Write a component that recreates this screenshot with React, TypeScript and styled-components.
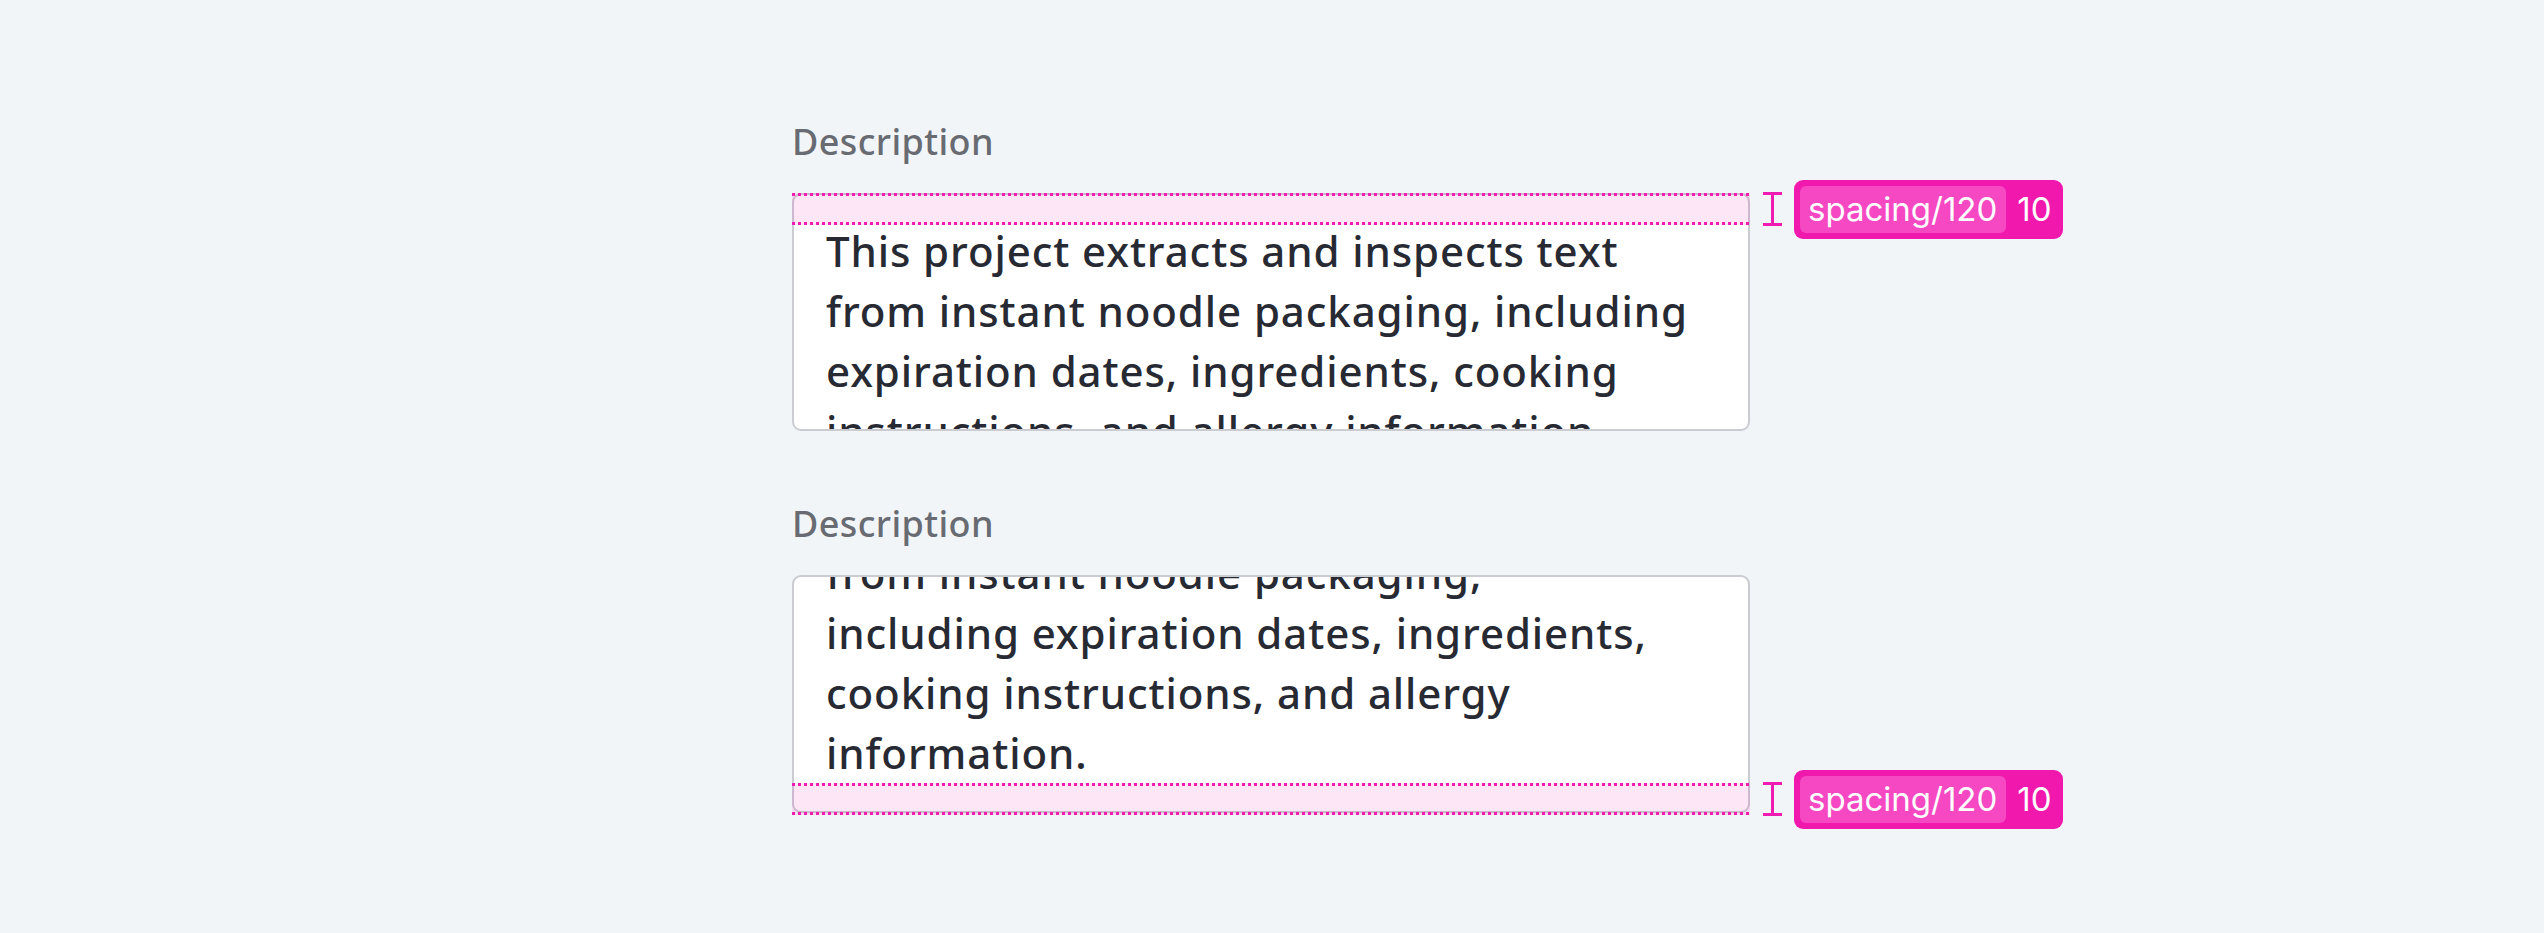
import React from 'react';
import styled, { createGlobalStyle } from 'styled-components';

const GlobalStyle = createGlobalStyle`
  html, body {
    margin: 0;
    padding: 0;
    background: #f2f5f8;
  }
`;

const Page = styled.main`
  min-height: 933px;
  box-sizing: border-box;
  padding: 120px 0 0 792px;
  display: flex;
  flex-direction: column;
  gap: 71px;
  background: #f2f5f8;
`;

const Field = styled.section`
  width: 958px;
  display: flex;
  flex-direction: column;
  gap: 29px;
`;

const Label = styled.label`
  font-family: 'Noto Sans', 'Lato', sans-serif;
  font-size: 36px;
  line-height: 44px;
  letter-spacing: 0.4px;
  font-weight: 500;
  color: #686b72;
`;

const BoxWrap = styled.div`
  position: relative;
`;

const Box = styled.div<{ $scrolled?: boolean }>`
  height: 238px;
  box-sizing: border-box;
  border: 2px solid #cbccd1;
  border-radius: 9px;
  background: #ffffff;
  overflow: hidden;
  display: flex;
  flex-direction: column;
  justify-content: ${(p) => (p.$scrolled ? 'flex-end' : 'flex-start')};
  padding: ${(p) => (p.$scrolled ? '0 32px 28px 32px' : '26px 32px 0 32px')};
`;

const Text = styled.p`
  margin: 0;
  font-family: 'Noto Sans', 'Lato', sans-serif;
  font-size: 42px;
  line-height: 60px;
  letter-spacing: 0.9px;
  font-weight: 500;
  color: #272a33;
  white-space: nowrap;
`;

const Line = styled.span`
  display: block;
`;

const pink = '#f01bb0';

const Band = styled.div<{ $edge: 'top' | 'bottom' }>`
  position: absolute;
  left: 0;
  right: 0;
  ${(p) => (p.$edge === 'top' ? 'top: 0;' : 'bottom: -2px;')}
  height: 32px;
  background:
    repeating-linear-gradient(to right, ${pink} 0 3px, transparent 3px 6px) top / 100% 3px no-repeat,
    repeating-linear-gradient(to right, ${pink} 0 3px, transparent 3px 6px) bottom / 100% 3px no-repeat,
    rgba(240, 27, 176, 0.11);
  pointer-events: none;
`;

const Annotation = styled.div`
  position: absolute;
  left: calc(100% + 13px);
  top: 0;
  bottom: 0;
  display: flex;
  align-items: center;
  gap: 12px;
`;

const Badge = styled.div`
  height: 59px;
  box-sizing: border-box;
  display: flex;
  align-items: center;
  gap: 11px;
  padding: 6px 11px 6px 6px;
  border-radius: 9px;
  background: #f118ae;
  font-family: 'Inter', 'Liberation Sans', sans-serif;
  font-size: 33px;
  color: #ffffff;
  white-space: nowrap;
`;

const Token = styled.span`
  height: 47px;
  display: flex;
  align-items: center;
  padding: 0 9px 0 8px;
  border-radius: 6px;
  background: #f548c2;
`;

const IBeam = () => (
  <svg width="19" height="34" viewBox="0 0 19 34">
    <rect x="0" y="0" width="19" height="3" fill={pink} />
    <rect x="8" y="0" width="3" height="34" fill={pink} />
    <rect x="0" y="31" width="19" height="3" fill={pink} />
  </svg>
);

interface SpacingNoteProps {
  edge: 'top' | 'bottom';
  token: string;
  value: number;
}

const SpacingNote: React.FC<SpacingNoteProps> = ({ edge, token, value }) => (
  <Band $edge={edge}>
    <Annotation>
      <IBeam />
      <Badge>
        <Token>{token}</Token>
        {value}
      </Badge>
    </Annotation>
  </Band>
);

const topLines = [
  'This project extracts and inspects text',
  'from instant noodle packaging, including',
  'expiration dates, ingredients, cooking',
  'instructions, and allergy information.',
];

const bottomLines = [
  'This project extracts and inspects text',
  'from instant noodle packaging,',
  'including expiration dates, ingredients,',
  'cooking instructions, and allergy',
  'information.',
];

const App: React.FC = () => {
  return (
    <>
      <GlobalStyle />
      <Page>
        <Field>
          <Label>Description</Label>
          <BoxWrap>
            <Box>
              <Text>
                {topLines.map((l, i) => (
                  <Line key={i}>{l}</Line>
                ))}
              </Text>
            </Box>
            <SpacingNote edge="top" token="spacing/120" value={10} />
          </BoxWrap>
        </Field>
        <Field>
          <Label>Description</Label>
          <BoxWrap>
            <Box $scrolled>
              <Text>
                {bottomLines.map((l, i) => (
                  <Line key={i}>{l}</Line>
                ))}
              </Text>
            </Box>
            <SpacingNote edge="bottom" token="spacing/120" value={10} />
          </BoxWrap>
        </Field>
      </Page>
    </>
  );
};

export default App;
